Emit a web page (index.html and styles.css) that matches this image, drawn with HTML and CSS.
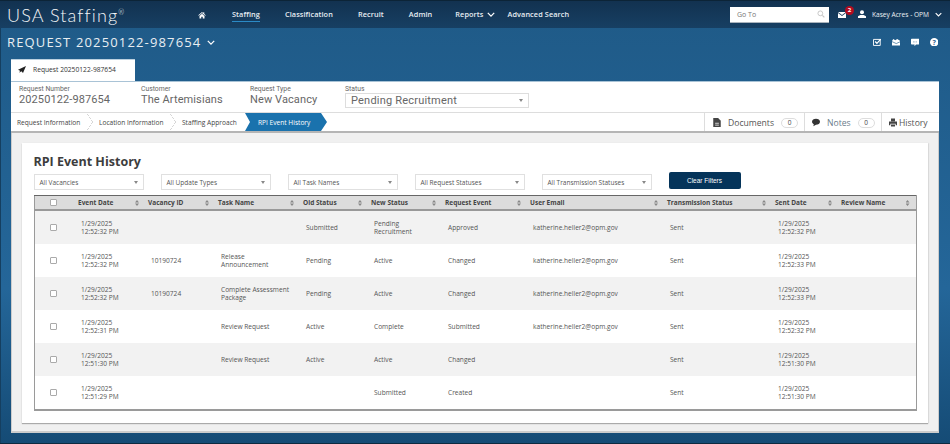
FILE: index.html
```html
<!DOCTYPE html>
<html lang="en">
<head>
    <meta charset="UTF-8">
    <title>RPI Event History</title>
    <link rel="stylesheet" href="styles.css">
</head>
<body>
    <header class="topbar">
        <div class="logo">USA Staffing<sup>®</sup></div>
        <nav class="main-nav">
            <svg class="home-icon" viewBox="0 0 16 14"><path fill="#fff" d="M8 1 0.5 7.5l1 1L8 3l6.500 5.500 1-1L12.500 5V1.500h-2v1.800zM3 9v5h3.500v-3.500h3V14H13V9L8 4.500z"/></svg>
            <a class="nav-link active">Staffing</a>
            <a class="nav-link">Classification</a>
            <a class="nav-link">Recruit</a>
            <a class="nav-link nav-admin">Admin</a>
            <a class="nav-link">Reports <svg class="chev" viewBox="0 0 10 6"><path d="M1 1l4 4 4-4" fill="none" stroke="#fff" stroke-width="1.600"/></svg></a>
            <a class="nav-link nav-search">Advanced Search</a>
        </nav>
        <div class="top-right">
            <div class="goto">
                <span>Go To</span>
                <svg class="search-icon" viewBox="0 0 12 12"><circle cx="5" cy="5" r="3.600" fill="none" stroke="#c4c4c4" stroke-width="1.400"/><path d="M8 8l3 3" stroke="#c4c4c4" stroke-width="1.800"/></svg>
            </div>
            <div class="mail">
                <svg class="mail-icon" viewBox="0 0 12 9"><path fill="#fff" d="M0 0h12L6 4.500zM0 1.500v7.500h12V1.500L6 6z"/></svg>
                <span class="badge">2</span>
            </div>
            <svg class="user-icon" viewBox="0 0 12 12"><circle cx="6" cy="3.200" r="3" fill="#fff"/><path fill="#fff" d="M0 12V9.500L3.500 7.500h5L12 9.500V12z"/></svg>
            <span class="user-name">Kasey Acres - OPM</span>
            <svg class="chev" viewBox="0 0 10 6"><path d="M1 1l4 4 4-4" fill="none" stroke="#fff" stroke-width="1.600"/></svg>
        </div>
    </header>

    <div class="title-bar">
        <h1>REQUEST 20250122-987654 <svg class="chev" viewBox="0 0 10 6"><path d="M1 1l4 4 4-4" fill="none" stroke="#fff" stroke-width="1.600"/></svg></h1>
        <div class="title-icons">
            <svg viewBox="0 0 12 12"><path fill="none" stroke="#fff" stroke-width="1.300" d="M.7 2h9.500v8.500H.7z"/><path fill="none" stroke="#fff" stroke-width="1.800" d="M3 5l2.500 2.500L11 1.500"/></svg>
            <svg viewBox="0 0 13 12"><path fill="#fff" d="M0 4l2-3 3 2 3-2 3 2 2 1v7H0z"/><path fill="none" stroke="#1f5c8a" d="M0 5l6.500 3L13 5"/></svg>
            <svg viewBox="0 0 12 12"><path fill="#fff" d="M1 1h10a1 1 0 0 1 1 1v6a1 1 0 0 1-1 1H7l-2 3V9H1a1 1 0 0 1-1-1V2a1 1 0 0 1 1-1z"/><path stroke="#1f5c8a" stroke-dasharray="1 1" d="M3 5.500h6"/></svg>
            <svg viewBox="0 0 12 12"><circle cx="6" cy="6" r="6" fill="#fff"/><text x="6" y="9.500" class="help-mark">?</text></svg>
        </div>
    </div>

    <div class="tab">
        <svg class="plane-icon" viewBox="0 0 12 12"><path fill="#222" d="M12 0 0 5.500l3 1.500L2 10l3-2 2.500 2.500z"/></svg>
        <span>Request 20250122-987654</span>
    </div>

    <main class="panel">
        <section class="summary">
            <div class="field field-number"><label>Request Number</label><div class="value">20250122-987654</div></div>
            <div class="field field-customer"><label>Customer</label><div class="value">The Artemisians</div></div>
            <div class="field field-type"><label>Request Type</label><div class="value">New Vacancy</div></div>
            <div class="field field-status">
                <label>Status</label>
                <div class="status-select"><span>Pending Recruitment</span><i class="caret"></i></div>
            </div>
        </section>

        <div class="steps-row">
            <div class="steps">
                <a class="step step-info">Request Information</a>
                <a class="step step-location">Location Information</a>
                <a class="step step-approach">Staffing Approach</a>
                <a class="step current">RPI Event History</a>
            </div>
            <div class="side-tabs">
                <a class="side-tab side-docs">
                    <svg viewBox="0 0 10 12"><path fill="#444" d="M0 0h6.500L10 3.500V12H0z"/><path stroke="#fff" d="M2.500 7h5M2.500 9.500h5"/></svg>
                    Documents <span class="count">0</span>
                </a>
                <a class="side-tab side-notes">
                    <svg viewBox="0 0 12 11"><path fill="#333" d="M6 0c3.300 0 6 2 6 4.500S9.300 9 6 9L2 11l.7-3C1 7.200 0 6 0 4.500 0 2 2.700 0 6 0z"/></svg>
                    Notes <span class="count">0</span>
                </a>
                <a class="side-tab side-history">
                    <svg viewBox="0 0 12 12"><path fill="#444" d="M3 0h6v4H3zM0 4.500h12V10h-2V8H2v2H0zM3 9h6v3H3z"/></svg>
                    History
                </a>
            </div>
        </div>

        <div class="content">
            <div class="card">
                <h2>RPI Event History</h2>
                <div class="filters">
                    <div class="filter"><span>All Vacancies</span><i class="caret"></i></div>
                    <div class="filter"><span>All Update Types</span><i class="caret"></i></div>
                    <div class="filter"><span>All Task Names</span><i class="caret"></i></div>
                    <div class="filter"><span>All Request Statuses</span><i class="caret"></i></div>
                    <div class="filter"><span>All Transmission Statuses</span><i class="caret"></i></div>
                    <button class="clear-btn">Clear Filters</button>
                </div>

                <table class="events">
                    <colgroup>
                        <col class="c-check"><col class="c-date"><col class="c-vac"><col class="c-task"><col class="c-old"><col class="c-new"><col class="c-req"><col class="c-email"><col class="c-trans"><col class="c-sent"><col class="c-review">
                    </colgroup>
                    <thead>
                        <tr>
                            <th class="check-cell"><span class="box"></span></th>
                            <th class="sort">Event Date</th>
                            <th class="sort">Vacancy ID</th>
                            <th class="sort">Task Name</th>
                            <th class="sort">Old Status</th>
                            <th class="sort">New Status</th>
                            <th class="sort">Request Event</th>
                            <th class="sort">User Email</th>
                            <th class="sort">Transmission Status</th>
                            <th class="sort">Sent Date</th>
                            <th class="sort">Review Name</th>
                        </tr>
                    </thead>
                    <tbody>
                        <tr>
                            <td class="check-cell"><span class="box"></span></td>
                            <td>1/29/2025<br>12:52:32 PM</td><td></td><td></td><td>Submitted</td><td>Pending Recruitment</td><td>Approved</td><td>katherine.heller2@opm.gov</td><td>Sent</td><td>1/29/2025<br>12:52:32 PM</td><td></td>
                        </tr>
                        <tr>
                            <td class="check-cell"><span class="box"></span></td>
                            <td>1/29/2025<br>12:52:32 PM</td><td>10190724</td><td>Release Announcement</td><td>Pending</td><td>Active</td><td>Changed</td><td>katherine.heller2@opm.gov</td><td>Sent</td><td>1/29/2025<br>12:52:33 PM</td><td></td>
                        </tr>
                        <tr>
                            <td class="check-cell"><span class="box"></span></td>
                            <td>1/29/2025<br>12:52:32 PM</td><td>10190724</td><td>Complete Assessment Package</td><td>Pending</td><td>Active</td><td>Changed</td><td>katherine.heller2@opm.gov</td><td>Sent</td><td>1/29/2025<br>12:52:33 PM</td><td></td>
                        </tr>
                        <tr>
                            <td class="check-cell"><span class="box"></span></td>
                            <td>1/29/2025<br>12:52:31 PM</td><td></td><td>Review Request</td><td>Active</td><td>Complete</td><td>Submitted</td><td>katherine.heller2@opm.gov</td><td>Sent</td><td>1/29/2025<br>12:52:32 PM</td><td></td>
                        </tr>
                        <tr>
                            <td class="check-cell"><span class="box"></span></td>
                            <td>1/29/2025<br>12:51:30 PM</td><td></td><td>Review Request</td><td>Active</td><td>Active</td><td>Changed</td><td></td><td>Sent</td><td>1/29/2025<br>12:51:30 PM</td><td></td>
                        </tr>
                        <tr>
                            <td class="check-cell"><span class="box"></span></td>
                            <td>1/29/2025<br>12:51:29 PM</td><td></td><td></td><td></td><td>Submitted</td><td>Created</td><td></td><td>Sent</td><td>1/29/2025<br>12:51:30 PM</td><td></td>
                        </tr>
                    </tbody>
                </table>
            </div>
        </div>
    </main>
</body>
</html>
```

FILE: styles.css
```css
html, body {
    margin: 0;
    height: 444px;
    overflow: hidden;
}
body {
    font-family: "Open Sans", "Noto Sans", sans-serif;
    font-size: 7.5px;
    color: #444;
    background: linear-gradient(to bottom, #1f5a87 0%, #246699 65%, #154b75 100%);
    box-sizing: border-box;
    border-bottom: 1px solid #0e2a40;
    box-shadow: inset 1px 0 0 #153f60;
}
svg {
    display: block;
}
.chev {
    width: 8px;
    height: 5px;
}

/* Top bar */
.topbar {
    height: 28px;
    box-sizing: border-box;
    border-top: 1px solid #0c2437;
    background: linear-gradient(to bottom, #123250, #173f63);
    display: flex;
    align-items: center;
    color: #fff;
}
.logo {
    width: 198px;
    padding-left: 7px;
    box-sizing: border-box;
    font-family: "Lato", sans-serif;
    font-size: 18px;
    font-weight: 300;
    letter-spacing: 1.1px;
    color: #f4f6f8;
}
.logo sup {
    font-size: 7px;
    vertical-align: 7px;
    line-height: 0;
}
.main-nav {
    display: flex;
    align-items: center;
    font-size: 7.300px;
    font-weight: 600;
    letter-spacing: .1px;
    color: #e8eef3;
    flex: 1;
}
.home-icon {
    width: 8px;
    height: 8px;
    margin-right: 26px;
}
.nav-link {
    display: flex;
    align-items: center;
    gap: 4px;
    margin-right: 25px;
    padding: 2px 0;
    border-bottom: 1px solid transparent;
}
.nav-admin {
    margin-right: 23px;
}
.nav-search {
    margin-right: 0;
    margin-left: -13px;
}
.nav-link.active {
    border-bottom: 1px solid #2b8ac6;
}
.top-right {
    display: flex;
    align-items: center;
}
.goto {
    width: 99px;
    height: 16px;
    background: #fff;
    border-bottom: 1px solid #aab4bd;
    box-sizing: border-box;
    display: flex;
    align-items: center;
    justify-content: space-between;
    padding: 0 4px 0 7px;
    color: #777;
    font-size: 7px;
}
.search-icon {
    width: 8px;
    height: 8px;
}
.mail {
    position: relative;
    margin-left: 9px;
}
.mail-icon {
    width: 8px;
    height: 6px;
}
.badge {
    position: absolute;
    top: -6px;
    left: 7px;
    width: 9px;
    height: 9px;
    border-radius: 50%;
    background: #b30c1f;
    color: #fff;
    font-size: 6px;
    font-weight: 700;
    line-height: 9px;
    text-align: center;
}
.user-icon {
    width: 8px;
    height: 8px;
    margin-left: 12px;
    margin-top: -1px;
}
.user-name {
    margin-left: 6px;
    margin-right: 6px;
    font-size: 6.600px;
    color: #eef2f5;
}
.top-right .chev {
    margin-right: 8px;
    width: 7px;
}

/* Title bar */
.title-bar {
    height: 31px;
    box-sizing: border-box;
    display: flex;
    align-items: center;
    justify-content: space-between;
    padding: 0 12px 3px 7px;
}
h1 {
    margin: 0;
    display: flex;
    align-items: center;
    gap: 6px;
    font-size: 13px;
    font-weight: 400;
    letter-spacing: 1.15px;
    color: #e9eef2;
}
.title-icons {
    display: flex;
    gap: 10.500px;
}
.title-icons svg {
    width: 8.500px;
    height: 8.500px;
}
.help-mark {
    font-size: 10px;
    font-weight: 700;
    fill: #1f5c8a;
    text-anchor: middle;
}

/* Tab and panel */
.tab {
    margin-left: 11px;
    width: 124px;
    height: 22px;
    box-sizing: border-box;
    background: #fff;
    border-top: 1px solid #bcd0df;
    display: flex;
    align-items: center;
    gap: 7px;
    padding: 0 0 2px 7px;
    font-size: 6.700px;
    color: #333;
}
.plane-icon {
    width: 8px;
    height: 8px;
}
.panel {
    margin: 0 11px;
    background: #fff;
    border-top: 1px solid #a9c3d6;
}
.summary {
    height: 31px;
    box-sizing: border-box;
    display: flex;
    padding: 4px 0 0 8px;
    border-bottom: 1px solid #ddd;
    font-family: "Roboto", sans-serif;
}
.field label {
    display: block;
    font-size: 6.800px;
    line-height: 7px;
    color: #666;
}
.value {
    font-size: 11px;
    line-height: 14px;
    letter-spacing: .1px;
    color: #666;
}
.field-number { width: 122px; }
.field-customer { width: 109px; }
.field-type { width: 95px; }
.status-select {
    width: 184px;
    height: 15px;
    box-sizing: border-box;
    border: 1px solid #ddd;
    display: flex;
    align-items: center;
    justify-content: space-between;
    padding: 0 5px;
    font-size: 11px;
    letter-spacing: .2px;
    color: #666;
}
.caret {
    width: 0;
    height: 0;
    border-left: 2px solid transparent;
    border-right: 2px solid transparent;
    border-top: 3px solid #888;
}

/* Step row */
.steps-row {
    height: 20px;
    box-sizing: border-box;
    display: flex;
    justify-content: space-between;
    font-size: 6.600px;
    border-bottom: 2px solid #b5b5b5;
}
.steps {
    display: flex;
    height: 18px;
}
.step {
    display: flex;
    align-items: center;
    color: #444;
    box-sizing: border-box;
    padding-left: 6px;
}
.step-info { width: 82px; }
.step-location { width: 83px; }
.step-approach { width: 69px; }
.step.current {
    width: 82px;
    padding-left: 13px;
    color: #fff;
    background: #1a72ad;
    clip-path: polygon(0 0, 76px 0, 82px 50%, 76px 100%, 0 100%, 5px 50%);
}
.step-info, .step-location {
    position: relative;
}
.step-info::after, .step-location::after {
    content: "";
    position: absolute;
    right: 0;
    top: 0;
    width: 6px;
    height: 18px;
    background: linear-gradient(to bottom left, transparent 49%, #d6d6d6 49%, #d6d6d6 55%, transparent 55%) top / 100% 50% no-repeat,
                linear-gradient(to top left, transparent 49%, #d6d6d6 49%, #d6d6d6 55%, transparent 55%) bottom / 100% 50% no-repeat;
}
.side-tabs {
    display: flex;
}
.side-tab {
    display: flex;
    align-items: center;
    box-sizing: border-box;
    border-left: 1px solid #ddd;
    padding-top: 1px;
    font-size: 8.600px;
    color: #555;
}
.side-tab svg {
    width: 8px;
    height: 9px;
}
.side-docs { width: 100px; padding-left: 8px; gap: 7px; }
.side-notes { width: 77px; padding-left: 7px; gap: 7px; color: #6a7c8a; }
.side-history { width: 58px; padding-left: 7px; gap: 2px; }
.count {
    min-width: 17px;
    height: 10px;
    box-sizing: border-box;
    border: 1px solid #ddd;
    border-radius: 6px;
    font-size: 6.500px;
    line-height: 8px;
    text-align: center;
    color: #444;
}

/* Content */
.content {
    background: #f0f0f0;
    padding: 10px;
    height: 300px;
    box-sizing: border-box;
    border: 1px solid #ccc;
    border-width: 0 1px 2px;
}
.card {
    background: #fff;
    height: 280px;
    box-sizing: border-box;
    padding: 11px 11.500px 0;
    box-shadow: 0 1px 1px #aaa, 1px 0 1px #e2e2e2;
}
h2 {
    margin: 0;
    font-size: 12.500px;
    line-height: 15px;
    font-weight: 700;
    color: #3d3d3d;
}
.filters {
    display: flex;
    height: 16px;
    gap: 16.500px;
    margin: 5px 0;
}
.filter {
    width: 110.500px;
    height: 16px;
    box-sizing: border-box;
    border: 1px solid #e0e0e0;
    display: flex;
    align-items: center;
    justify-content: space-between;
    padding: 0 5px;
    font-size: 6.500px;
    color: #555;
}
.clear-btn {
    margin: -2px 0 0 0;
    width: 72px;
    height: 17px;
    border: none;
    border-radius: 2px;
    background: #05345a;
    color: #fff;
    font-family: "Liberation Sans", sans-serif;
    font-size: 6.500px;
}

/* Table */
.events {
    width: 883px;
    table-layout: fixed;
    border-collapse: collapse;
    border-style: solid;
    border-width: 1px 1.500px 2px 1.500px;
    border-color: #666 #9a9a9a #9a9a9a #9a9a9a;
}
.c-check { width: 41px; }
.c-date, .c-vac { width: 70px; }
.c-task { width: 85px; }
.c-old { width: 68px; }
.c-new { width: 74px; }
.c-req { width: 85px; }
.c-email { width: 137px; }
.c-trans { width: 108px; }
.c-sent { width: 66px; }
.events th {
    height: 13px;
    padding: 0 0 0 3px;
    background: #dcdcdc;
    border-bottom: 2px solid #999;
    font-size: 6.500px;
    font-weight: 700;
    text-align: left;
    color: #444;
    position: relative;
}
.events th.sort::after {
    content: "";
    position: absolute;
    right: 6px;
    top: 4px;
    width: 4px;
    height: 6px;
    background: #888;
    clip-path: polygon(50% 0, 100% 40%, 0 40%, 50% 0, 0 60%, 100% 60%, 50% 100%, 0 60%);
}
.events td {
    height: 33px;
    padding: 0 8px 0 6px;
    line-height: 8px;
    font-size: 6.600px;
    color: #555;
    vertical-align: middle;
}
.events tbody tr:nth-child(odd) td {
    background: #f2f2f2;
}
.events .check-cell {
    padding: 0;
}
.box {
    display: block;
    box-sizing: border-box;
    width: 7px;
    height: 7px;
    margin-left: 15px;
    background: #fff;
    border: 1px solid #aaa;
    border-radius: 1px;
}
```
